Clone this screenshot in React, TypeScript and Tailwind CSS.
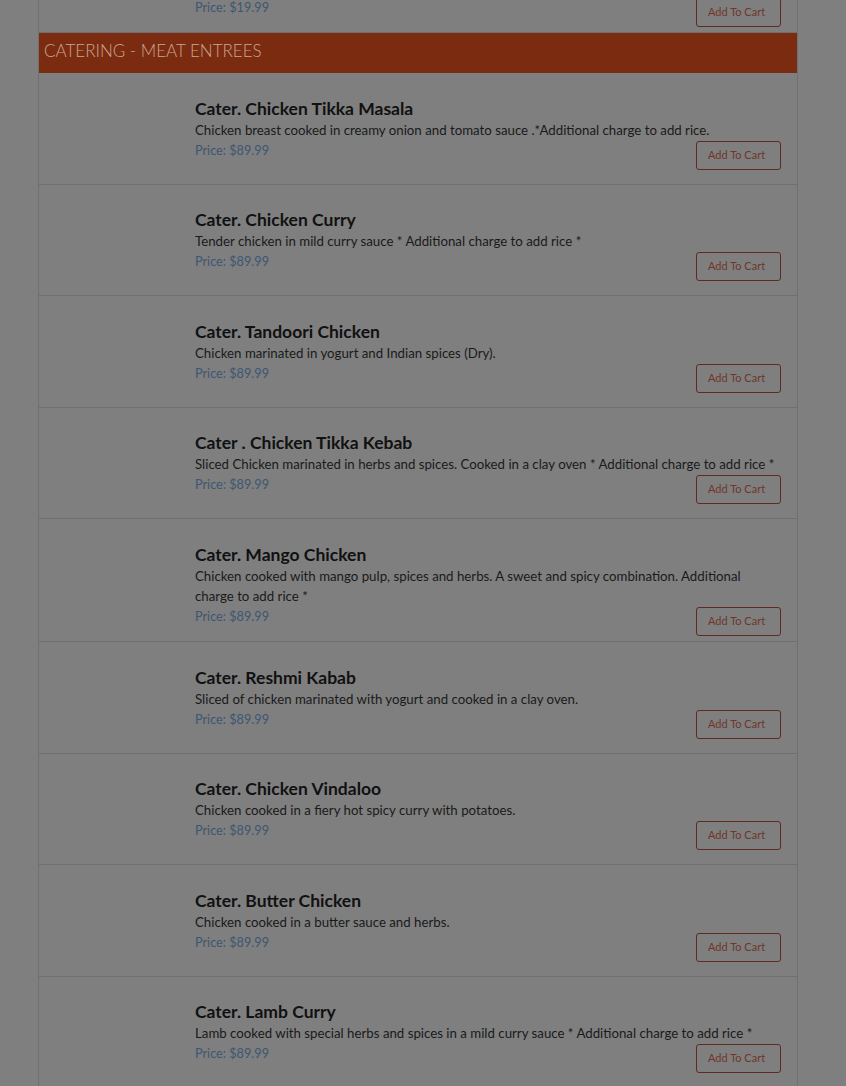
import React from "react";

const items = [
  { t: "Cater. Chicken Tikka Masala", d: "Chicken breast cooked in creamy onion and tomato sauce .*Additional charge to add rice." },
  { t: "Cater. Chicken Curry", d: "Tender chicken in mild curry sauce * Additional charge to add rice *" },
  { t: "Cater. Tandoori Chicken", d: "Chicken marinated in yogurt and Indian spices (Dry)." },
  { t: "Cater . Chicken Tikka Kebab", d: "Sliced Chicken marinated in herbs and spices. Cooked in a clay oven * Additional charge to add rice *" },
  { t: "Cater. Mango Chicken", d: "Chicken cooked with mango pulp, spices and herbs. A sweet and spicy combination. Additional charge to add rice *" },
  { t: "Cater. Reshmi Kabab", d: "Sliced of chicken marinated with yogurt and cooked in a clay oven." },
  { t: "Cater. Chicken Vindaloo", d: "Chicken cooked in a fiery hot spicy curry with potatoes." },
  { t: "Cater. Butter Chicken", d: "Chicken cooked in a butter sauce and herbs." },
  { t: "Cater. Lamb Curry", d: "Lamb cooked with special herbs and spices in a mild curry sauce * Additional charge to add rice *" },
];

function Row({ t, d, price }: { t: string; d: string; price: string }) {
  return (
    <div className="flex min-h-[111.5px] border-b border-[#707070]">
      <div className="w-[156px] shrink-0" />
      <div className="flex-1 pt-[24.5px] pb-[15.5px] pr-[16px]">
        <div className="text-[17.5px] leading-[22px] font-bold text-[#111111]">{t}</div>
        <div className="max-w-[584px] text-[13.25px] leading-[20px] text-[#1a1a1a]">{d}</div>
        <div className="flex h-[20px] items-start justify-between">
          <span className="text-[12.7px] leading-[20px] text-[#3e5672]">Price: {price}</span>
          <button className="mt-[1px] h-[29px] w-[85px] shrink-0 rounded-[3px] border border-[#5f2b21] pl-[11px] text-left text-[11px] text-[#6f3629]">
            Add To Cart
          </button>
        </div>
      </div>
    </div>
  );
}

export default function App() {
  return (
    <div
      className="h-[1086px] w-full overflow-hidden bg-[#7f7f7f]"
      style={{ fontFamily: "'Lato', 'Noto Sans', sans-serif" }}
    >
      <div className="-mt-[90px] ml-[38px] w-[760px] border-x border-[#707070] bg-[#7f7f7f]">
        <Row
          t="Cater. Vegetable Samosa"
          d="Crispy pastry stuffed with spiced potatoes and green peas, served with mint and tamarind chutney. Tray serves a large party of guests."
          price="$19.99"
        />
        <div className="h-[40px] bg-[#7b2c10] pl-[5px] text-[17px] leading-[36px] font-light uppercase text-[#caa594]">
          Catering - Meat Entrees
        </div>
        {items.map((it) => (
          <Row key={it.t} t={it.t} d={it.d} price="$89.99" />
        ))}
      </div>
    </div>
  );
}
